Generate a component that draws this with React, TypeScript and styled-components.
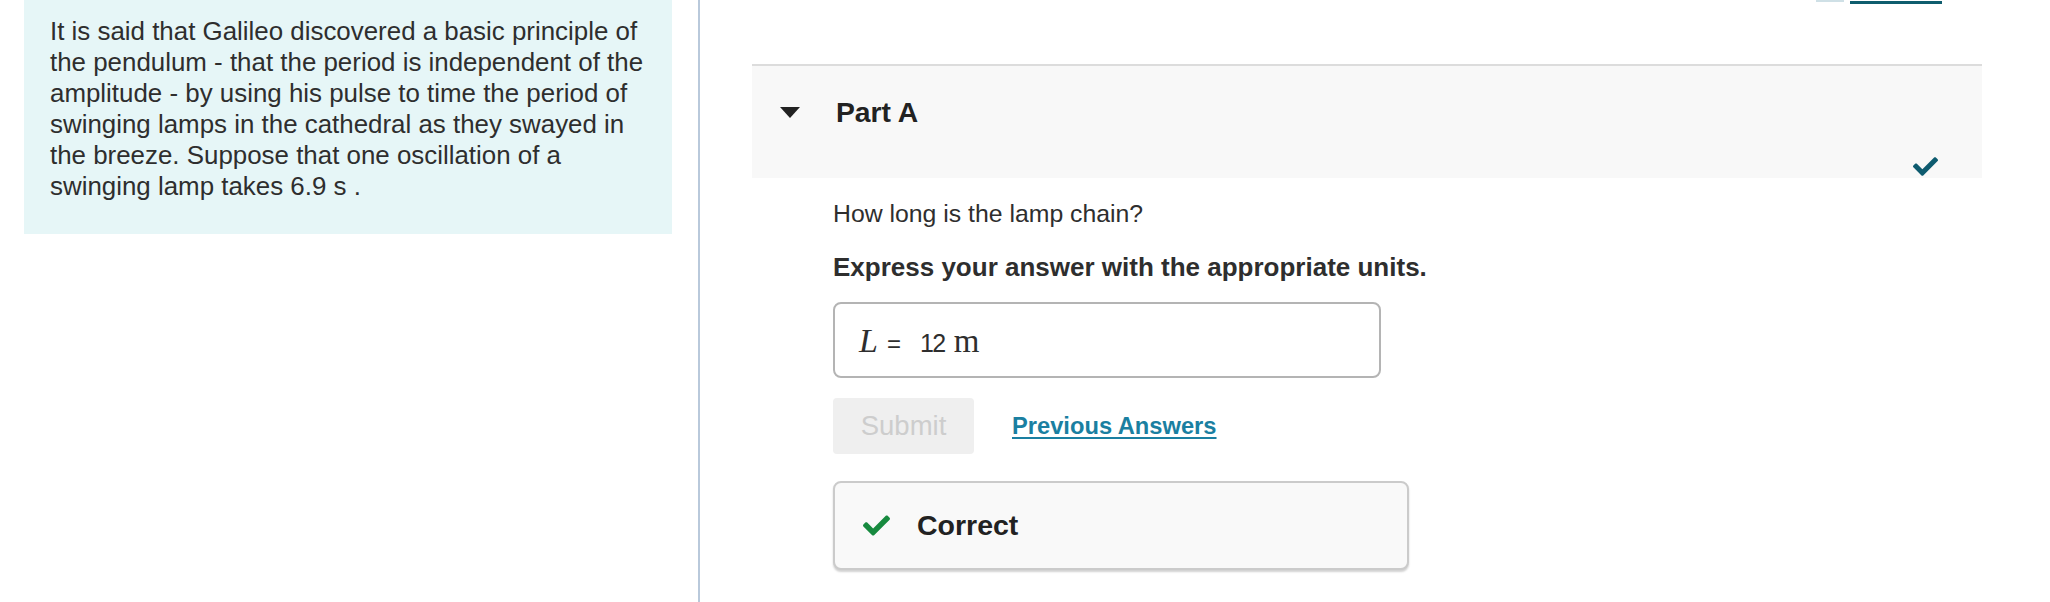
import styled, { createGlobalStyle } from "styled-components";
import { FaCheck } from "react-icons/fa";

const GlobalStyle = createGlobalStyle`
  html, body {
    margin: 0;
    padding: 0;
    background: #fff;
  }
  body {
    font-family: "Liberation Sans", Arial, Helvetica, sans-serif;
    color: #2e2e2e;
  }
`;

export default function App() {
  return (
    <>
      <GlobalStyle />
      <Page>
        <LeftCol>
          <ProblemBox>
            It is said that Galileo discovered a basic principle of the
            pendulum - that the period is independent of the amplitude - by
            using his pulse to time the period of swinging lamps in the
            cathedral as they swayed in the breeze. Suppose that one
            oscillation of a swinging lamp takes 6.9 s .
          </ProblemBox>
        </LeftCol>

        <Divider />

        <RightCol>
          <ToolRow>
            <ToolStub />
            <ToolLink />
          </ToolRow>

          <PartHeader>
            <TitleRow>
              <Caret />
              <PartTitle>Part A</PartTitle>
            </TitleRow>
            <StatusRow>
              <FaCheck size={25} color="#0e5b6f" />
            </StatusRow>
          </PartHeader>

          <PartBody>
            <Question>How long is the lamp chain?</Question>
            <Instruction>Express your answer with the appropriate units.</Instruction>

            <AnswerBox>
              <MathVar>L</MathVar>
              <MathOp>=</MathOp>
              <MathNum>12</MathNum>
              <MathUnit>m</MathUnit>
            </AnswerBox>

            <ActionRow>
              <SubmitBtn type="button" disabled>
                Submit
              </SubmitBtn>
              <PrevLink href="#">Previous Answers</PrevLink>
            </ActionRow>

            <Feedback>
              <FaCheck size={27} color="#178a3f" />
              <FeedbackText>Correct</FeedbackText>
            </Feedback>
          </PartBody>
        </RightCol>
      </Page>
    </>
  );
}

/* ---------- styled ---------- */
const Page = styled.div`
  display: flex;
  min-height: 100vh;
  width: 2050px;
`;

const LeftCol = styled.div`
  width: 648px;
  padding: 0 26px 0 24px;
  flex-shrink: 0;
`;

const ProblemBox = styled.div`
  background: #e6f6f7;
  padding: 16px 20px 32px 26px;
  font-size: 25.9px;
  line-height: 31px;
`;

const Divider = styled.div`
  width: 2px;
  flex-shrink: 0;
  background: #b9c9db;
`;

const RightCol = styled.div`
  flex: 1;
  padding: 0 68px 0 52px;
`;

const ToolRow = styled.div`
  height: 4px;
  display: flex;
  justify-content: flex-end;
  align-items: flex-start;
  gap: 6px;
  padding-right: 40px;
`;

const ToolStub = styled.span`
  width: 28px;
  height: 2px;
  background: #cfe0e6;
`;

const ToolLink = styled.span`
  width: 92px;
  height: 3px;
  margin-top: 1px;
  background: #0f5d6e;
`;

const PartHeader = styled.div`
  margin-top: 60px;
  border-top: 2px solid #dcdcdc;
  background: #f8f8f8;
  padding: 26px 44px 2px 28px;
`;

const TitleRow = styled.div`
  display: flex;
  align-items: center;
  gap: 36px;
  height: 40px;
`;

const Caret = styled.span`
  width: 0;
  height: 0;
  border-left: 10px solid transparent;
  border-right: 10px solid transparent;
  border-top: 11px solid #222;
`;

const PartTitle = styled.h2`
  margin: 0;
  font-size: 28.3px;
  font-weight: 700;
  color: #222;
`;

const StatusRow = styled.div`
  margin-top: 25px;
  height: 19px;
  display: flex;
  justify-content: flex-end;
  align-items: center;
`;

const PartBody = styled.div`
  padding: 20px 0 0 81px;
`;

const Question = styled.p`
  margin: 0;
  font-size: 24.8px;
  line-height: 31px;
`;

const Instruction = styled.p`
  margin: 23px 0 0;
  font-size: 26px;
  line-height: 31px;
  font-weight: 700;
`;

const AnswerBox = styled.div`
  margin-top: 19px;
  width: 548px;
  height: 76px;
  box-sizing: border-box;
  border: 2px solid #b4b4b4;
  border-radius: 8px;
  display: flex;
  align-items: baseline;
  padding: 18px 0 0 24px;
`;

const MathVar = styled.span`
  font-family: "Liberation Serif", "Times New Roman", serif;
  font-style: italic;
  font-size: 34px;
`;

const MathOp = styled.span`
  font-size: 24px;
  margin: 0 19px 0 9px;
`;

const MathNum = styled.span`
  font-size: 25px;
  letter-spacing: -1.5px;
  margin-right: 9px;
`;

const MathUnit = styled.span`
  font-family: "Liberation Serif", "Times New Roman", serif;
  font-size: 33px;
`;

const ActionRow = styled.div`
  margin-top: 20px;
  display: flex;
  align-items: center;
  gap: 38px;
`;

const SubmitBtn = styled.button`
  width: 141px;
  height: 56px;
  border: none;
  border-radius: 4px;
  background: #efefef;
  color: #cdcdcd;
  font-family: inherit;
  font-size: 27.5px;
`;

const PrevLink = styled.a`
  font-size: 23.7px;
  font-weight: 700;
  color: #1a7fa1;
  text-decoration: underline;
  text-underline-offset: 3px;
`;

const Feedback = styled.div`
  margin-top: 27px;
  width: 576px;
  height: 89px;
  box-sizing: border-box;
  border: 2px solid #cbcbcb;
  border-radius: 8px;
  background: #f9f9f9;
  box-shadow: 0 2px 2px rgba(0, 0, 0, 0.18);
  display: flex;
  align-items: center;
  gap: 27px;
  padding-left: 28px;
`;

const FeedbackText = styled.span`
  font-size: 28.5px;
  font-weight: 700;
  color: #222;
`;
